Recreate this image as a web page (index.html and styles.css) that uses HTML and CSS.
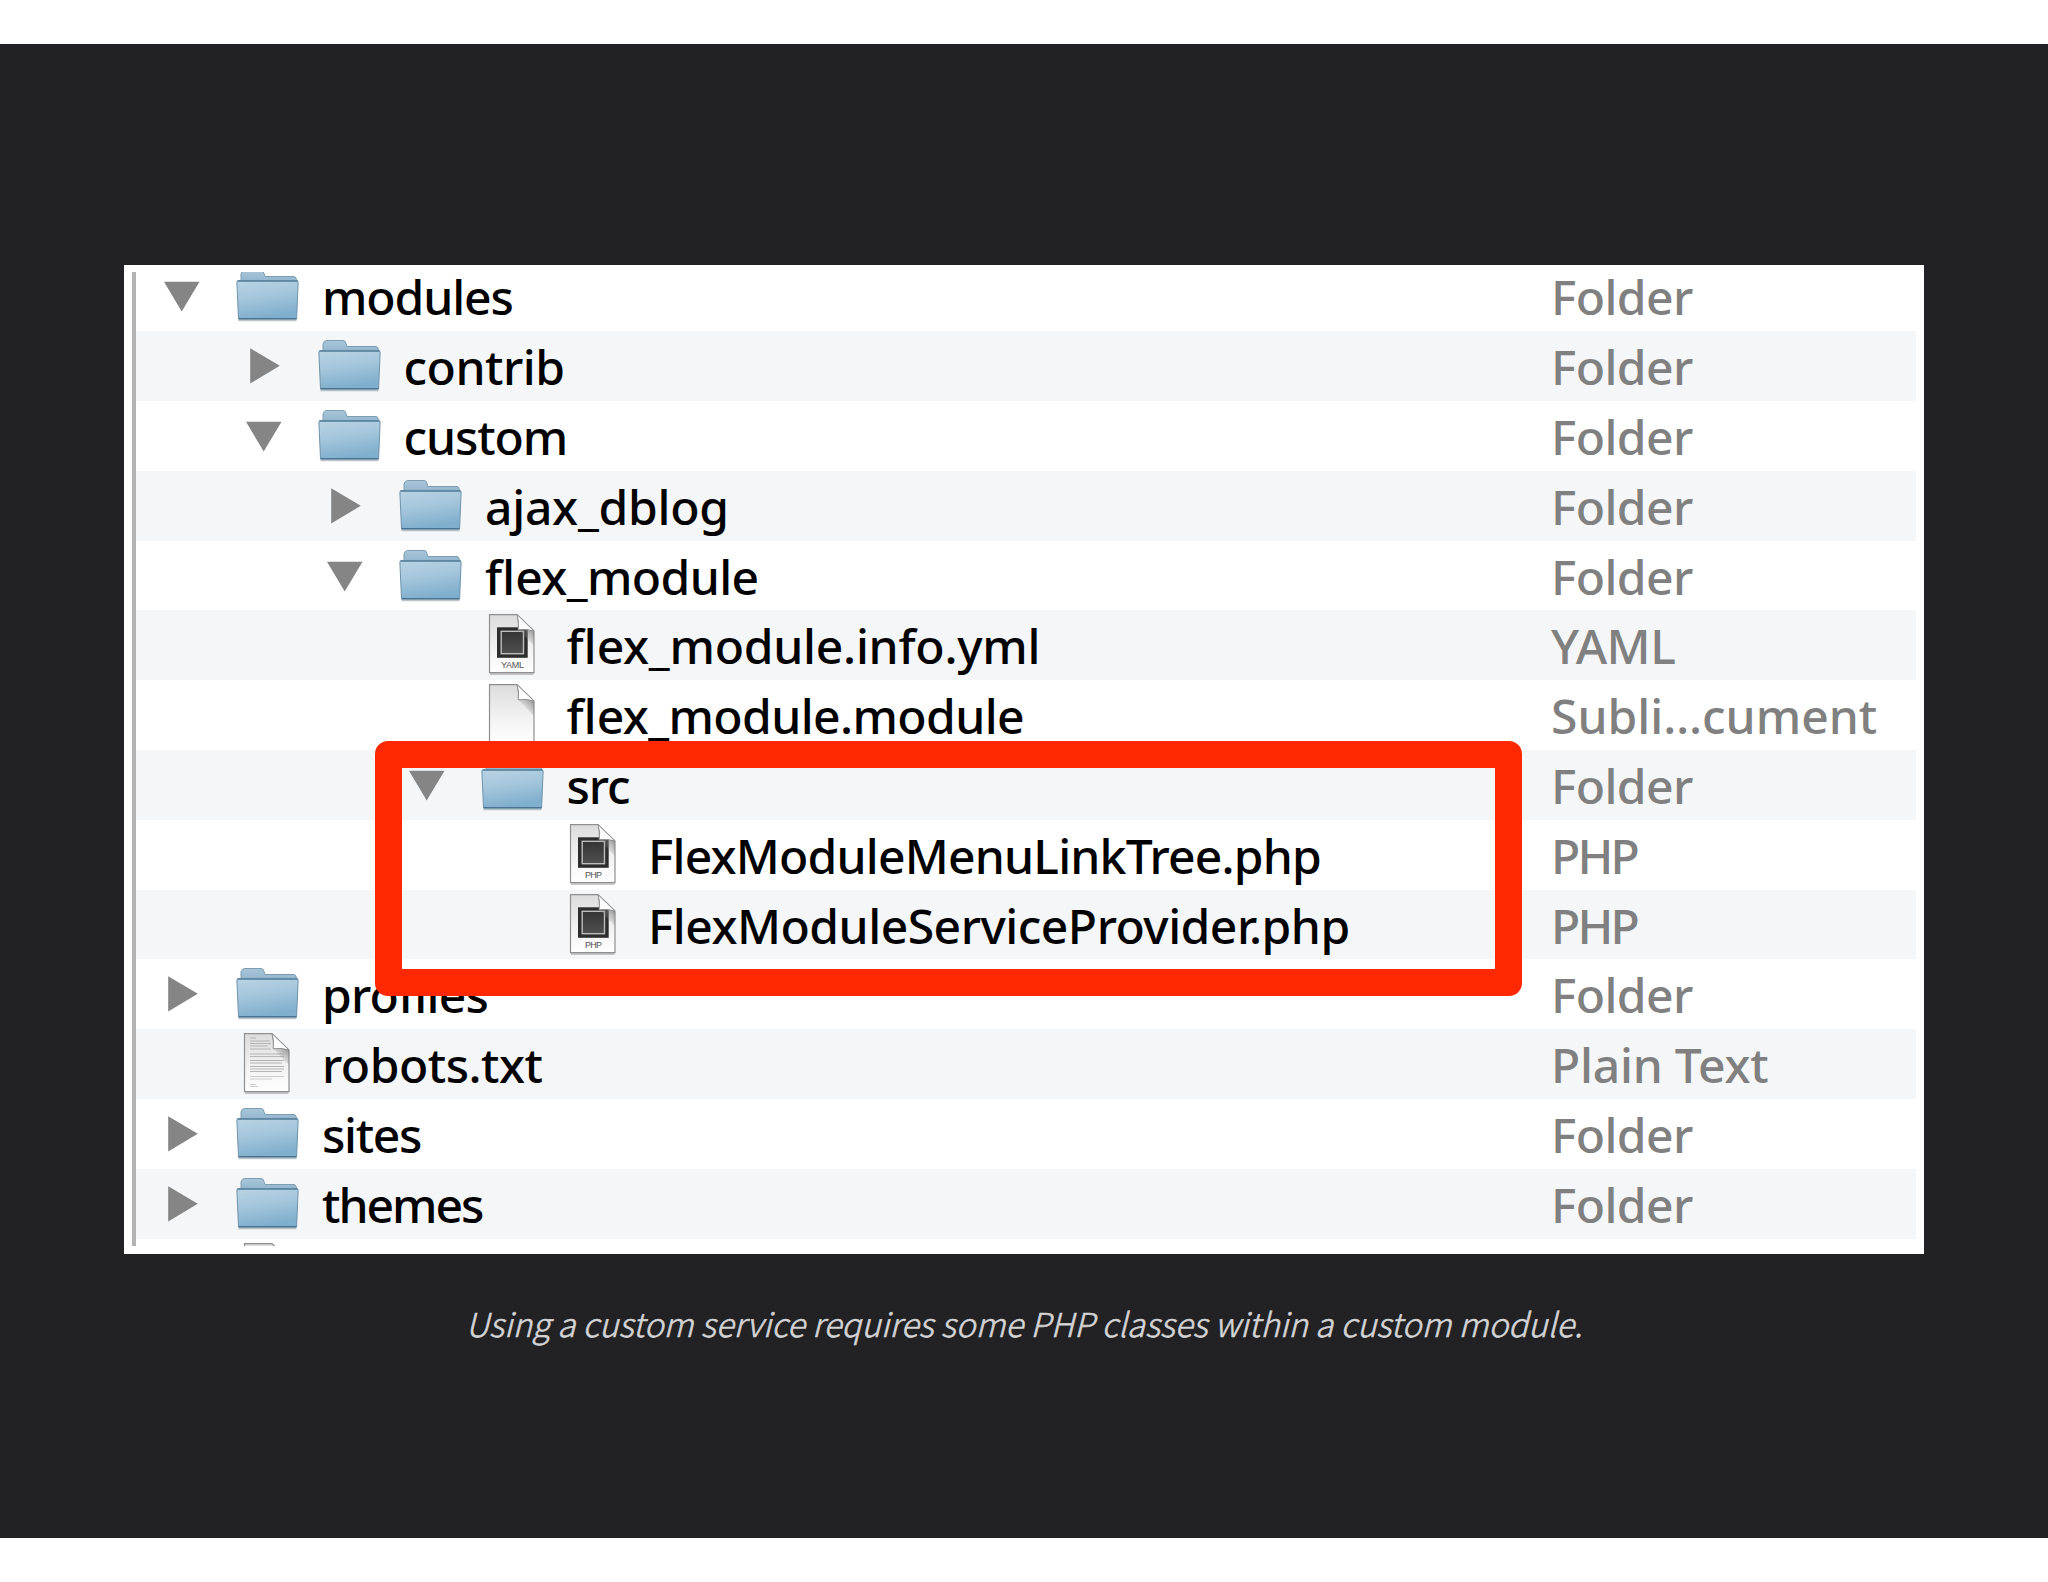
FILE: index.html
```
<!DOCTYPE html>
<html lang="en">
<head>
    <meta charset="UTF-8">
    <title>Custom service classes</title>
    <link rel="stylesheet" href="styles.css">
</head>
<body>
    <!-- shared icons -->
    <svg class="defs" width="0" height="0">
        <defs>
            <linearGradient id="folderFill" x1="0" y1="0" x2="0.25" y2="1">
                <stop offset="0" stop-color="#b9d3e4"/>
                <stop offset="0.5" stop-color="#a3c5db"/>
                <stop offset="1" stop-color="#80afcd"/>
            </linearGradient>
            <linearGradient id="tabFill" x1="0" y1="0" x2="0" y2="1">
                <stop offset="0" stop-color="#a9c6d9"/>
                <stop offset="1" stop-color="#8fb3cb"/>
            </linearGradient>
            <linearGradient id="pageFill" x1="0" y1="0" x2="0" y2="1">
                <stop offset="0" stop-color="#dcdcdc"/>
                <stop offset="0.6" stop-color="#f3f3f3"/>
                <stop offset="1" stop-color="#ffffff"/>
            </linearGradient>
            <linearGradient id="chipFill" x1="0" y1="0" x2="0" y2="1">
                <stop offset="0" stop-color="#343434"/>
                <stop offset="1" stop-color="#505050"/>
            </linearGradient>
            <linearGradient id="foldShade" x1="0.6" y1="0.3" x2="0.3" y2="0.8">
                <stop offset="0" stop-color="#777" stop-opacity="0.7"/>
                <stop offset="1" stop-color="#999" stop-opacity="0"/>
            </linearGradient>
        </defs>
        <symbol id="down" viewBox="0 0 36 70">
            <path d="M0 20.8H35.500L17.700 50.5Z" fill="#858585"/>
        </symbol>
        <symbol id="right" viewBox="0 0 36 70">
            <path d="M4.2 17.2V52.5L33.8 34.8Z" fill="#858585"/>
        </symbol>
        <symbol id="folder" viewBox="0 0 64 70">
            <path d="M2.5 59.3H60.5" stroke="#6b7f8c" stroke-opacity="0.45" stroke-width="2"/>
            <path d="M5 22V13Q6 9.5 8.500 9.500H25Q27.500 9.500 28 12.500L29 15.500H58Q60 15.500 60.500 19V22Z" fill="url(#tabFill)" stroke="#7d9db3" stroke-width="1"/>
            <path d="M1.800 19.800H61.300Q62.300 19.800 62.100 22L60.600 57.700H2.500L0.900 22Q0.800 19.800 1.800 19.800Z" fill="url(#folderFill)" stroke="#6e93ab" stroke-width="1"/>
            <path d="M1.500 20H61.600" stroke="#57809b" stroke-width="1.300"/>
            <path d="M2.500 57.700H60.600" stroke="#4a7492" stroke-width="1.500"/>
        </symbol>
        <symbol id="page" viewBox="0 0 64 70">
            <path d="M9 64H52.500" stroke="#000" stroke-opacity="0.2" stroke-width="2"/>
            <path d="M8.500 4.600H36L53 21V62.700H8.500Z" fill="url(#pageFill)" stroke="#8f8f8f" stroke-width="1.200"/>
        </symbol>
        <symbol id="fold" viewBox="0 0 64 70">
            <path d="M37 19.500L53 36V21L36 5Z" fill="url(#foldShade)"/>
            <path d="M36 4.600Q38.500 12 37.200 19.800Q45 18.500 53 21Z" fill="#fdfdfd" stroke="#909090" stroke-width="1"/>
        </symbol>
        <symbol id="chip" viewBox="0 0 64 70">
            <rect x="16" y="17.300" width="30.700" height="30.500" fill="#2d2d2d"/>
            <rect x="20.200" y="21.300" width="22.300" height="22.400" fill="url(#chipFill)" stroke="#bdbdbd" stroke-width="1.400"/>
        </symbol>
    </svg>

    <div class="slide">
        <div class="screenshot">
            <div class="file-list">
                <div class="row">
                    <svg class="arrow"><use href="#down"/></svg>
                    <svg class="icon"><use href="#folder"/></svg>
                    <span class="name ls-10">modules</span>
                    <span class="kind ls-6">Folder</span>
                </div>
                <div class="row level-1">
                    <svg class="arrow"><use href="#right"/></svg>
                    <svg class="icon"><use href="#folder"/></svg>
                    <span class="name ls-5">contrib</span>
                    <span class="kind ls-6">Folder</span>
                </div>
                <div class="row level-1">
                    <svg class="arrow"><use href="#down"/></svg>
                    <svg class="icon"><use href="#folder"/></svg>
                    <span class="name ls-10">custom</span>
                    <span class="kind ls-6">Folder</span>
                </div>
                <div class="row level-2">
                    <svg class="arrow"><use href="#right"/></svg>
                    <svg class="icon"><use href="#folder"/></svg>
                    <span class="name ls-3">ajax_dblog</span>
                    <span class="kind ls-6">Folder</span>
                </div>
                <div class="row level-2">
                    <svg class="arrow"><use href="#down"/></svg>
                    <svg class="icon"><use href="#folder"/></svg>
                    <span class="name ls-6"><span class="lig">fl</span>ex_module</span>
                    <span class="kind ls-6">Folder</span>
                </div>
                <div class="row level-3">
                    <svg class="arrow"></svg>
                    <svg class="icon" viewBox="0 0 64 70">
                        <use href="#page"/><use href="#chip"/><use href="#fold"/>
                        <text x="31.500" y="58.300" textLength="23" class="badge">YAML</text>
                    </svg>
                    <span class="name ls-3"><span class="lig">fl</span>ex_module.info.yml</span>
                    <span class="kind ls-5">YAML</span>
                </div>
                <div class="row level-3">
                    <svg class="arrow"></svg>
                    <svg class="icon"><use href="#page"/><use href="#fold"/></svg>
                    <span class="name ls-6"><span class="lig">fl</span>ex_module.module</span>
                    <span class="kind">Subli…cument</span>
                </div>
                <div class="row level-3">
                    <svg class="arrow"><use href="#down"/></svg>
                    <svg class="icon"><use href="#folder"/></svg>
                    <span class="name ls-10">src</span>
                    <span class="kind ls-6">Folder</span>
                </div>
                <div class="row level-4">
                    <svg class="arrow"></svg>
                    <svg class="icon" viewBox="0 0 64 70">
                        <use href="#page"/><use href="#chip"/><use href="#fold"/>
                        <text x="31.500" y="58.300" textLength="17" class="badge">PHP</text>
                    </svg>
                    <span class="name ls-8">FlexModuleMenuLinkTree.php</span>
                    <span class="kind ls-25">PHP</span>
                </div>
                <div class="row level-4">
                    <svg class="arrow"></svg>
                    <svg class="icon" viewBox="0 0 64 70">
                        <use href="#page"/><use href="#chip"/><use href="#fold"/>
                        <text x="31.500" y="58.300" textLength="17" class="badge">PHP</text>
                    </svg>
                    <span class="name ls-5">FlexModuleServiceProvider.php</span>
                    <span class="kind ls-25">PHP</span>
                </div>
                <div class="row">
                    <svg class="arrow"><use href="#right"/></svg>
                    <svg class="icon"><use href="#folder"/></svg>
                    <span class="name ls-8">profiles</span>
                    <span class="kind ls-6">Folder</span>
                </div>
                <div class="row">
                    <svg class="arrow"></svg>
                    <svg class="icon" viewBox="0 0 64 70">
                        <use href="#page"/>
                        <g stroke="#b4b4b4" stroke-width="1">
                            <path d="M14 9H20M14 12H34M14 14.500H35M14 17H32M14 20H35"/>
                            <path d="M14 25H48M14 27.500H48M14 31.500H48M14 34H46M14 37.500H48M14 40H48M14 42.500H46"/>
                            <path d="M14 47.500H48M14 50H36M14 55.500H20M14 57.500H22" stroke="#cccccc"/>
                        </g>
                        <use href="#fold"/>
                    </svg>
                    <span class="name ls-5">robots.txt</span>
                    <span class="kind ls-3">Plain Text</span>
                </div>
                <div class="row">
                    <svg class="arrow"><use href="#right"/></svg>
                    <svg class="icon"><use href="#folder"/></svg>
                    <span class="name ls-13">sites</span>
                    <span class="kind ls-6">Folder</span>
                </div>
                <div class="row">
                    <svg class="arrow"><use href="#right"/></svg>
                    <svg class="icon"><use href="#folder"/></svg>
                    <span class="name ls-20">themes</span>
                    <span class="kind ls-6">Folder</span>
                </div>
                <div class="row">
                    <svg class="arrow"></svg>
                    <svg class="icon"><use href="#page"/></svg>
                </div>
            </div>
            <div class="highlight"></div>
        </div>
        <p class="caption">Using a custom service requires some PHP classes within a custom module.</p>
    </div>
</body>
</html>
```
FILE: styles.css
```
body {
    margin: 0;
    padding: 44px 0;
    background: #fff;
}
.defs {
    display: block;
}
.slide {
    height: 1494px;
    padding-top: 221px;
    box-sizing: border-box;
    background: #222224;
}
.screenshot {
    position: relative;
    width: 1800px;
    height: 988.5px;
    margin: 0 auto;
    padding: 7px 8px 8px;
    box-sizing: border-box;
    background: #fff;
}
.file-list {
    height: 973.5px;
    box-sizing: border-box;
    border-left: 4px solid #b4b4b4;
    overflow: hidden;
}
.row {
    display: flex;
    height: 69.83px;
    padding-left: 28px;
    font-family: "Noto Sans", sans-serif;
    font-size: 48px;
    font-weight: 500;
    line-height: 72px;
    white-space: nowrap;
    color: #000;
}
.row:first-child {
    margin-top: -10.8px;
}
.row:nth-child(even) {
    background: #f5f6f8;
}
.level-1 { padding-left: 109.5px; }
.level-2 { padding-left: 191px; }
.level-3 { padding-left: 272.5px; }
.level-4 { padding-left: 354px; }

.arrow {
    flex: none;
    width: 36px;
    height: 70px;
}
.icon {
    flex: none;
    width: 64px;
    height: 70px;
    margin-left: 36px;
    margin-right: 22px;
}
.badge {
    font-family: "Liberation Sans", sans-serif;
    font-size: 9px;
    text-anchor: middle;
    fill: #555;
}
.name {
    flex: 1;
}
.kind {
    width: 365px;
    color: #808080;
}

/* tracking */
.ls-3 { letter-spacing: -0.25px; }
.ls-5 { letter-spacing: -0.5px; }
.ls-6 { letter-spacing: -0.6px; }
.ls-8 { letter-spacing: -0.8px; }
.ls-10 { letter-spacing: -1.1px; }
.ls-13 { letter-spacing: -1.3px; }
.ls-20 { letter-spacing: -2px; }
.ls-25 { letter-spacing: -2.8px; }
.lig { letter-spacing: 0; }

/* red frame over the src folder */
.highlight {
    position: absolute;
    left: 251px;
    top: 476px;
    width: 1147px;
    height: 255px;
    box-sizing: border-box;
    border: 27px solid #ff2800;
    border-radius: 13px;
}
.caption {
    margin: 45.5px 0 0;
    text-align: center;
    font-family: "Noto Sans CJK SC", sans-serif;
    font-size: 33px;
    font-style: italic;
    font-weight: 300;
    line-height: 48px;
    letter-spacing: 0.02px;
    color: #d4d4d5;
    -webkit-text-stroke: 0.6px #d4d4d5;
}
```
